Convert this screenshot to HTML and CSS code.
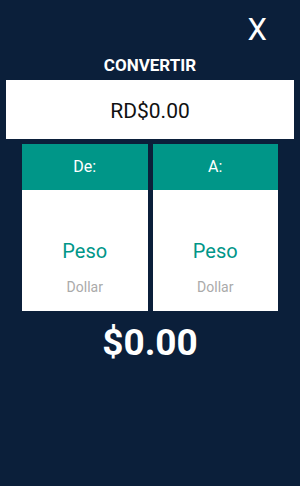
FILE: index.html
```html
<!DOCTYPE html>
<html>
<head>
<meta charset="utf-8">
<title>Convertir</title>
<link rel="stylesheet" href="styles.css">
</head>
<body>
<div class="screen">
  <div class="top">
    <button class="close" type="button">X</button>
  </div>
  <h1 class="title">CONVERTIR</h1>
  <div class="amount">RD$0.00</div>
  <div class="cards">
    <div class="card">
      <div class="card-head">De:</div>
      <div class="card-body">
        <p class="name">Peso</p>
        <p class="sub">Dollar</p>
      </div>
    </div>
    <div class="card">
      <div class="card-head">A:</div>
      <div class="card-body">
        <p class="name">Peso</p>
        <p class="sub">Dollar</p>
      </div>
    </div>
  </div>
  <div class="result">$0.00</div>
</div>
</body>
</html>
```

FILE: styles.css
```css
html, body { margin: 0; padding: 0; }
body { background: #0b1f3a; font-family: Roboto, "Liberation Sans", sans-serif; color: #fff; }
.screen { width: 300px; height: 486px; box-sizing: border-box; padding-top: 12px; }
.top { display: flex; justify-content: flex-end; padding-right: 33px; height: 36px; }
.close { margin: 0; padding: 0; border: 0; background: none; color: #fff; font: 31px/36px Roboto, "Liberation Sans", sans-serif; cursor: pointer; }
.title { margin: 7px 0 0; font-size: 17px; line-height: 20px; font-weight: bold; text-align: center; }
.amount { margin: 5px 6px 0; height: 59px; box-sizing: border-box; padding-top: 4px; background: #fff; color: #111; font-size: 21px; line-height: 55px; text-align: center; }
.cards { display: flex; gap: 5px; margin: 5px 22px 0; }
.card { flex: 1; background: #fff; }
.card-head { height: 46px; background: #009688; color: #fff; font-size: 16px; line-height: 46px; text-align: center; }
.card-body { height: 121px; display: flex; flex-direction: column; align-items: center; justify-content: center; box-sizing: border-box; padding-top: 6px; }
.card-body p { margin: 0; }
.name { color: #009688; font-size: 20px; line-height: 24px; margin-top: 26px !important; }
.sub { color: #aaa; font-size: 14px; line-height: 16px; margin-top: 16px !important; }
.result { margin-top: 10px; text-align: center; font-size: 37px; line-height: 44px; font-weight: bold; }
```
